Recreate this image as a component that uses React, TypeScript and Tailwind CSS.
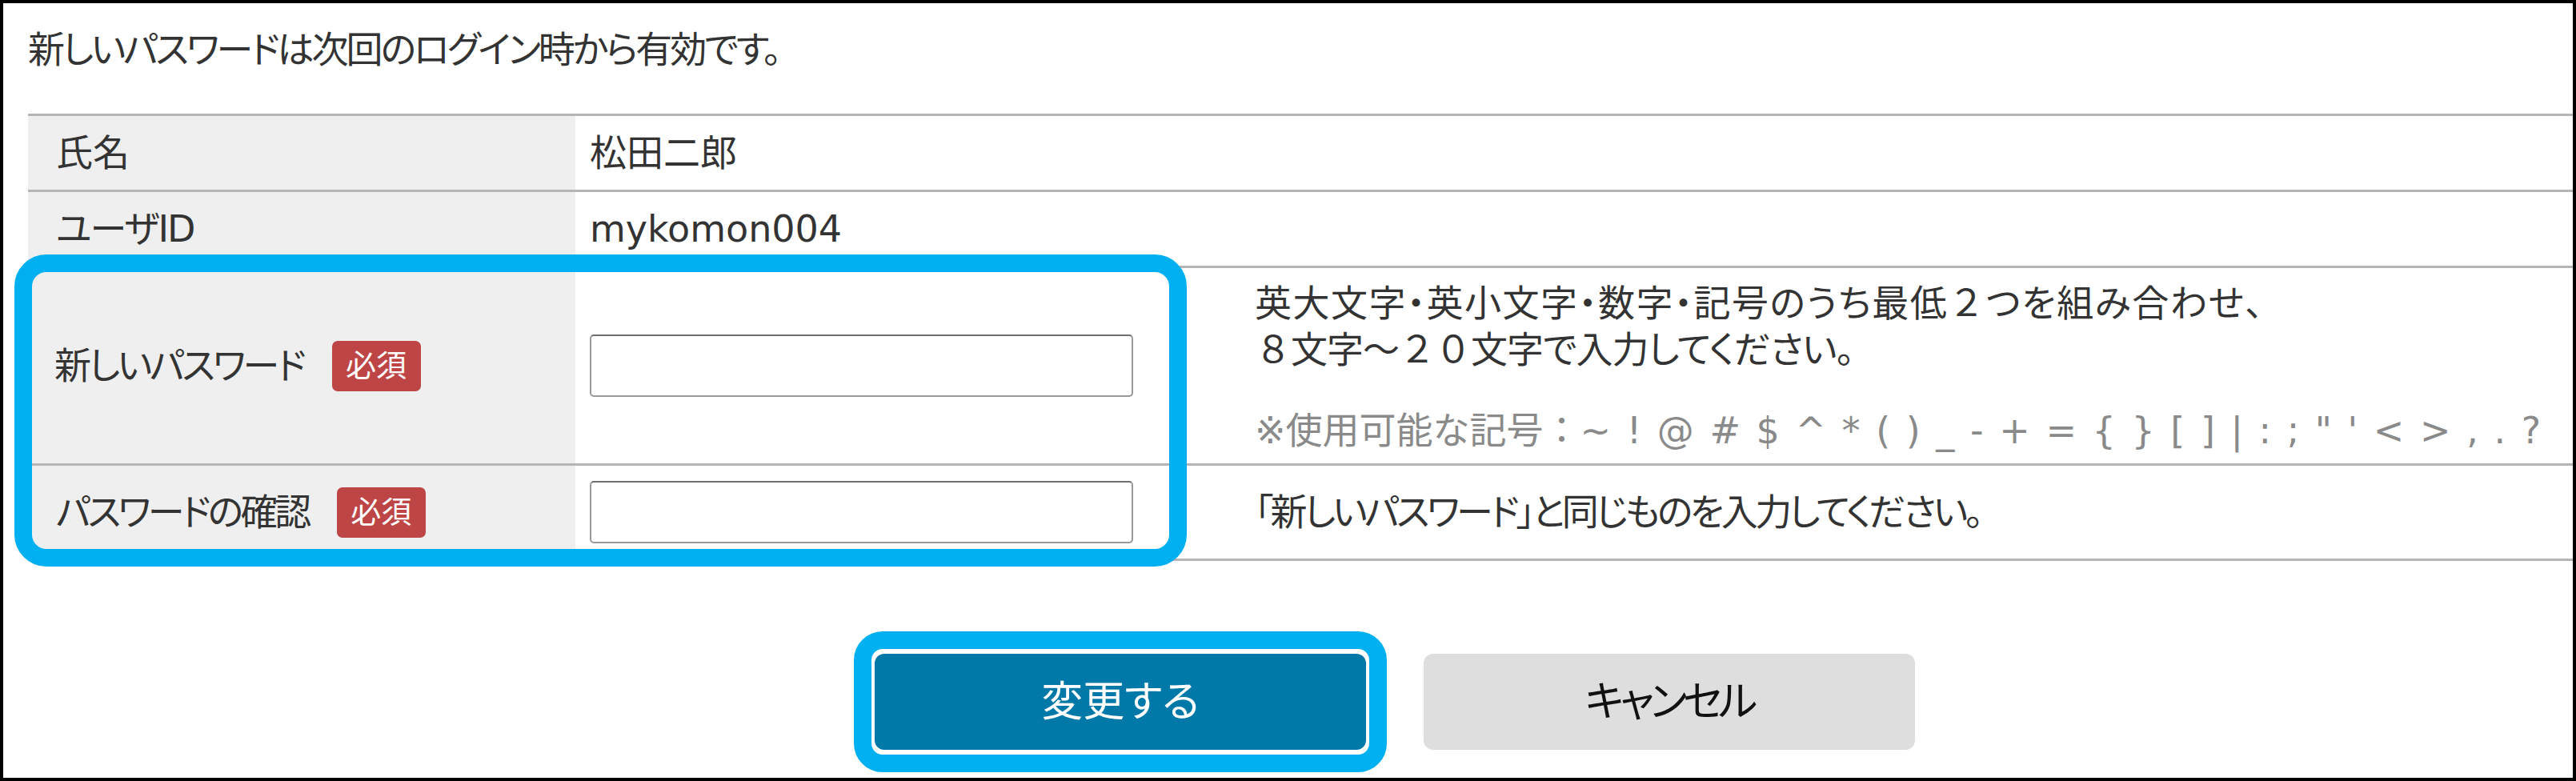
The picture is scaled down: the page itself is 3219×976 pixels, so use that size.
const Badge = () => (
  <span className="ml-[35px] inline-flex h-[63px] w-[111px] items-center justify-center rounded-[7px] bg-[#bd4545] text-[38px] tracking-normal text-white">
    必須
  </span>
);

const PasswordInput = () => (
  <input
    type="password"
    className="h-[78px] w-[679px] rounded-[5px] border-2 border-[#999] border-t-[#6f6f6f] bg-white outline-none"
  />
);

// full-width digits keep their full em width
const Wide = ({ children }: { children: string }) => (
  <span className="[font-feature-settings:normal]">{children}</span>
);

export default function App() {
  return (
    <div className="relative h-[976px] w-[3219px] overflow-hidden border-4 border-black bg-white font-['DejaVu_Sans','Noto_Sans_CJK_JP',sans-serif] text-[46px] text-[#333] [font-feature-settings:'palt']">
      <div className="h-[138px] pl-[31px] pt-[29px] leading-[58px] tracking-[-3px]">
        新しいパスワードは次回のログイン時から有効です。
      </div>

      <div className="ml-[31px] border-b-[3px] border-[#b5b5b5]">
        <div className="grid h-[95px] grid-cols-[684px_1fr] border-t-[3px] border-[#b5b5b5]">
          <div className="flex items-center bg-[#efefef] pl-[35px]">氏名</div>
          <div className="flex items-center pl-[18px]">松田二郎</div>
        </div>
        <div className="grid h-[95px] grid-cols-[684px_1fr] border-t-[3px] border-[#b5b5b5]">
          <div className="flex items-center bg-[#efefef] pl-[35px] tracking-[-2px]">ユーザID</div>
          <div className="flex items-center pl-[18px]">mykomon004</div>
        </div>
        <div className="grid h-[247px] grid-cols-[684px_821px_1fr] border-t-[3px] border-[#b5b5b5]">
          <div className="flex items-center bg-[#efefef] pl-[33px]">
            <span className="tracking-[-3px]">新しいパスワード</span>
            <Badge />
          </div>
          <div className="flex items-center pl-[18px]">
            <PasswordInput />
          </div>
          <div className="pl-[28px] pt-[15px] leading-[58px]">
            <p className="tracking-[1.5px]">
              英大文字・英小文字・数字・記号のうち最低<Wide>２</Wide>つを組み合わせ、
            </p>
            <p className="tracking-[-1px]">
              <Wide>８</Wide>文字～<Wide>２０</Wide>文字で入力してください。
            </p>
            <p className="mt-[43px] text-[#8a8a8a] [font-feature-settings:normal]">
              ※使用可能な記号：
              <span className="[word-spacing:5px]">{'~ ! @ # $ ^ * ( ) _ - + = { } [ ] | : ; " \' < > , . ?'}</span>
            </p>
          </div>
        </div>
        <div className="grid h-[119px] grid-cols-[684px_821px_1fr] border-t-[3px] border-[#b5b5b5]">
          <div className="flex items-center bg-[#efefef] pl-[35px]">
            <span className="tracking-[-3.5px]">パスワードの確認</span>
            <Badge />
          </div>
          <div className="flex items-center pl-[18px]">
            <PasswordInput />
          </div>
          <div className="flex items-center pl-[28px] tracking-[-3.5px]">
            「新しいパスワード」と同じものを入力してください。
          </div>
        </div>
      </div>

      <div className="mt-[88px] flex items-center pl-[1063px]">
        <div className="rounded-[36px] border-[22px] border-[#00b0f0] px-[4px] py-[6px]">
          <button className="h-[120px] w-[614px] rounded-[12px] bg-[#0079a8] text-[52px] text-white">
            変更する
          </button>
        </div>
        <button className="ml-[46px] h-[120px] w-[614px] rounded-[12px] bg-[#dedede] text-[52px] tracking-[-5px] text-[#111]">
          キャンセル
        </button>
      </div>

      {/* annotation frame over the password rows */}
      <div className="pointer-events-none absolute left-[14px] top-[314px] h-[390px] w-[1465px] rounded-[40px] border-[22px] border-[#00b0f0]" />
    </div>
  );
}
